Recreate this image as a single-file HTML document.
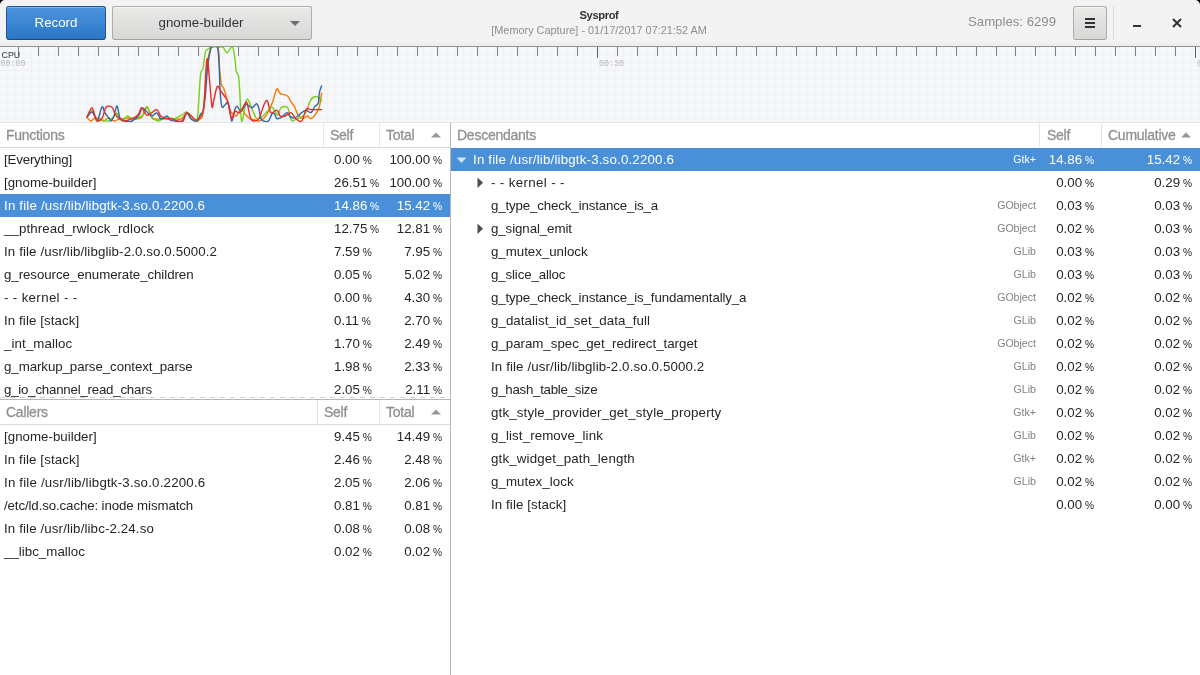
<!DOCTYPE html>
<html><head><meta charset="utf-8"><title>Sysprof</title>
<style>
*{box-sizing:border-box;margin:0;padding:0}
html,body{width:1200px;height:675px;overflow:hidden;background:#fff}
body{position:relative;font-family:"Liberation Sans",sans-serif;color:#2e3436}
.a{position:absolute}
.t{position:absolute;white-space:nowrap;line-height:23px;font-size:13.3px;color:#232627}
.p{font-size:10.2px}
.hd{position:absolute;white-space:nowrap;line-height:24px;font-size:14px;letter-spacing:-0.25px;-webkit-text-stroke:0.3px #8f9292;color:#8f9292}
.sel{background:#4a90d9}
.sel .t,.sel .lib{color:#fff}
.lib{position:absolute;white-space:nowrap;line-height:23px;font-size:10.6px;color:#7f8383;text-align:right}
.r{text-align:right}
</style></head><body><div id="w" style="position:absolute;left:0;top:0;width:1200px;height:675px;overflow:hidden;will-change:transform">

<div class="a" style="left:0;top:0;width:1200px;height:46px;background:linear-gradient(#f3f3f3,#f3f3f3 88%,#ececec)"></div>
<div class="a" style="left:0;top:46px;width:1200px;height:1px;background:#90938f"></div>
<svg class="a" style="left:0;top:0" width="6" height="6"><path d="M0 0H5A5 5 0 0 0 0 5Z" fill="#000"/></svg>
<svg class="a" style="left:1194px;top:0" width="6" height="6"><path d="M6 0H1A5 5 0 0 1 6 5Z" fill="#000"/></svg>
<div class="a" style="left:6px;top:6px;width:100px;height:34px;border:1px solid #1c5596;border-bottom-color:#174b85;border-radius:3px;background:linear-gradient(#4d93dc,#3c86d4 50%,#2a76c5);box-shadow:inset 0 1px 0 rgba(255,255,255,.3)"></div>
<div class="t" style="left:6px;top:11px;width:100px;text-align:center;font-size:13.3px;color:#fff">Record</div>
<div class="a" style="left:112px;top:6px;width:200px;height:34px;border:1px solid #adadaa;border-bottom-color:#a2a29f;border-radius:3px;background:linear-gradient(#e9e9e8,#d8d8d6);box-shadow:inset 0 1px 0 rgba(255,255,255,.6)"></div>
<div class="t" style="left:112px;top:11px;width:178px;text-align:center;color:#2e3436">gnome-builder</div>
<svg class="a" style="left:290px;top:21px" width="10" height="6"><path d="M0 0H10L5 5Z" fill="#6d7070"/></svg>
<div class="a" style="left:0;top:8px;width:1198px;text-align:center;font-size:11.2px;font-weight:bold;letter-spacing:-0.4px;color:#2e3436;line-height:14px">Sysprof</div>
<div class="a" style="left:0;top:23px;width:1198px;text-align:center;font-size:10.9px;color:#8b8e8f;line-height:14px">[Memory Capture] - 01/17/2017 07:21:52 AM</div>
<div class="t" style="left:968px;top:10px;font-size:13.2px;color:#8b8e8f">Samples: 6299</div>
<div class="a" style="left:1073px;top:6px;width:34px;height:34px;border:1px solid #adadaa;border-bottom-color:#a2a29f;border-radius:3px;background:linear-gradient(#e9e9e8,#d8d8d6);box-shadow:inset 0 1px 0 rgba(255,255,255,.6)"></div>
<div class="a" style="left:1085px;top:18px;width:10px;height:2px;background:#2e3436"></div>
<div class="a" style="left:1085px;top:22px;width:10px;height:2px;background:#2e3436"></div>
<div class="a" style="left:1085px;top:26px;width:10px;height:2px;background:#2e3436"></div>
<div class="a" style="left:1113px;top:6px;width:1px;height:34px;background:#dcdcdb"></div>
<div class="a" style="left:1133px;top:25px;width:8px;height:2px;background:#2e3436"></div>
<svg class="a" style="left:1172px;top:18px" width="10" height="10"><path d="M1 1L9 9M9 1L1 9" stroke="#2e3436" stroke-width="2"/></svg>
<svg class="a" style="left:0;top:47px" width="1200" height="75" viewBox="0 47 1200 75"><rect x="0" y="47" width="1200" height="75" fill="#f6f7f9"/><path d="M7.5 47V122 M15.5 47V122 M23.5 47V122 M31.5 47V122 M39.5 47V122 M47.5 47V122 M55.5 47V122 M63.5 47V122 M71.5 47V122 M79.5 47V122 M87.5 47V122 M95.5 47V122 M103.5 47V122 M111.5 47V122 M119.5 47V122 M127.5 47V122 M135.5 47V122 M143.5 47V122 M151.5 47V122 M159.5 47V122 M167.5 47V122 M175.5 47V122 M183.5 47V122 M191.5 47V122 M199.5 47V122 M207.5 47V122 M215.5 47V122 M223.5 47V122 M231.5 47V122 M239.5 47V122 M247.5 47V122 M255.5 47V122 M263.5 47V122 M271.5 47V122 M279.5 47V122 M287.5 47V122 M295.5 47V122 M303.5 47V122 M311.5 47V122 M319.5 47V122 M327.5 47V122 M335.5 47V122 M343.5 47V122 M351.5 47V122 M359.5 47V122 M367.5 47V122 M375.5 47V122 M383.5 47V122 M391.5 47V122 M399.5 47V122 M407.5 47V122 M415.5 47V122 M423.5 47V122 M431.5 47V122 M439.5 47V122 M447.5 47V122 M455.5 47V122 M463.5 47V122 M471.5 47V122 M479.5 47V122 M487.5 47V122 M495.5 47V122 M503.5 47V122 M511.5 47V122 M519.5 47V122 M527.5 47V122 M535.5 47V122 M543.5 47V122 M551.5 47V122 M559.5 47V122 M567.5 47V122 M575.5 47V122 M583.5 47V122 M591.5 47V122 M599.5 47V122 M607.5 47V122 M615.5 47V122 M623.5 47V122 M631.5 47V122 M639.5 47V122 M647.5 47V122 M655.5 47V122 M663.5 47V122 M671.5 47V122 M679.5 47V122 M687.5 47V122 M695.5 47V122 M703.5 47V122 M711.5 47V122 M719.5 47V122 M727.5 47V122 M735.5 47V122 M743.5 47V122 M751.5 47V122 M759.5 47V122 M767.5 47V122 M775.5 47V122 M783.5 47V122 M791.5 47V122 M799.5 47V122 M807.5 47V122 M815.5 47V122 M823.5 47V122 M831.5 47V122 M839.5 47V122 M847.5 47V122 M855.5 47V122 M863.5 47V122 M871.5 47V122 M879.5 47V122 M887.5 47V122 M895.5 47V122 M903.5 47V122 M911.5 47V122 M919.5 47V122 M927.5 47V122 M935.5 47V122 M943.5 47V122 M951.5 47V122 M959.5 47V122 M967.5 47V122 M975.5 47V122 M983.5 47V122 M991.5 47V122 M999.5 47V122 M1007.5 47V122 M1015.5 47V122 M1023.5 47V122 M1031.5 47V122 M1039.5 47V122 M1047.5 47V122 M1055.5 47V122 M1063.5 47V122 M1071.5 47V122 M1079.5 47V122 M1087.5 47V122 M1095.5 47V122 M1103.5 47V122 M1111.5 47V122 M1119.5 47V122 M1127.5 47V122 M1135.5 47V122 M1143.5 47V122 M1151.5 47V122 M1159.5 47V122 M1167.5 47V122 M1175.5 47V122 M1183.5 47V122 M1191.5 47V122 M1199.5 47V122 M0 54.5H1200 M0 62.5H1200 M0 70.5H1200 M0 78.5H1200 M0 86.5H1200 M0 94.5H1200 M0 102.5H1200 M0 110.5H1200 M0 118.5H1200" stroke="#eff1f3" stroke-width="1" fill="none"/><path d="M18.5 47V56 M38.5 47V56 M58.5 47V56 M78.5 47V56 M98.5 47V56 M118.5 47V56 M138.5 47V56 M158.5 47V56 M178.5 47V56 M198.5 47V56 M218.5 47V56 M238.5 47V56 M258.5 47V56 M278.5 47V56 M298.5 47V56 M318.5 47V56 M337.5 47V56 M357.5 47V56 M377.5 47V56 M397.5 47V56 M417.5 47V56 M437.5 47V56 M457.5 47V56 M477.5 47V56 M497.5 47V56 M517.5 47V56 M537.5 47V56 M557.5 47V56 M577.5 47V56 M617.5 47V56 M637.5 47V56 M657.5 47V56 M676.5 47V56 M696.5 47V56 M716.5 47V56 M736.5 47V56 M756.5 47V56 M776.5 47V56 M796.5 47V56 M816.5 47V56 M836.5 47V56 M856.5 47V56 M876.5 47V56 M896.5 47V56 M916.5 47V56 M936.5 47V56 M956.5 47V56 M976.5 47V56 M996.5 47V56 M1015.5 47V56 M1035.5 47V56 M1055.5 47V56 M1075.5 47V56 M1095.5 47V56 M1115.5 47V56 M1135.5 47V56 M1155.5 47V56 M1175.5 47V56" stroke="#7b8083" stroke-width="1" fill="none"/><path d="M597.5 47V58 M1195.5 47V58" stroke="#5a5e61" stroke-width="1" fill="none"/><clipPath id="cc"><rect x="0" y="47" width="1200" height="75"/></clipPath><g clip-path="url(#cc)" fill="none" stroke-width="1.4" stroke-linejoin="round" stroke-linecap="round"><path d="M87.0 117.3 C87.6 117.9 89.5 120.8 90.7 121.0 C91.9 121.2 93.0 119.0 94.2 118.5 C95.4 118.0 96.2 117.6 97.8 118.0 C99.4 118.4 101.9 121.0 103.7 121.0 C105.5 121.0 106.7 118.0 108.5 118.0 C110.3 118.0 112.7 120.8 114.4 121.0 C116.2 121.2 117.2 119.4 119.0 119.0 C120.8 118.6 123.2 118.7 125.0 118.5 C126.8 118.3 128.0 117.9 129.8 118.0 C131.6 118.1 133.7 119.1 135.7 119.0 C137.7 118.9 140.2 118.9 141.7 117.3 C143.2 115.7 143.7 111.4 144.6 109.6 C145.5 107.8 146.2 106.4 147.0 106.7 C147.8 107.0 148.5 109.4 149.4 111.4 C150.3 113.4 151.2 117.2 152.3 118.5 C153.4 119.8 154.1 118.9 155.9 119.0 C157.7 119.1 160.7 119.1 163.0 119.0 C165.3 118.9 167.0 118.5 170.0 118.5 C173.0 118.5 178.0 119.9 180.8 119.0 C183.6 118.1 184.9 113.2 186.7 113.2 C188.5 113.2 189.9 117.7 191.5 119.0 C193.1 120.3 194.8 121.0 196.2 121.0 C197.6 121.0 198.9 120.4 200.0 119.0 C201.1 117.6 201.9 121.0 203.0 112.6 C204.1 104.2 205.6 78.4 206.6 68.7 C207.6 59.0 208.2 58.0 209.0 54.5 C209.8 51.0 209.8 48.6 211.3 47.4 C212.8 46.1 216.5 43.5 217.9 47.0 C219.3 50.5 219.0 62.5 219.6 68.7 C220.2 74.9 220.6 80.5 221.4 84.1 C222.2 87.6 223.5 87.4 224.4 90.0 C225.3 92.6 226.0 96.7 226.8 99.5 C227.6 102.3 228.3 104.5 229.1 106.7 C229.9 108.9 230.3 111.0 231.5 112.6 C232.7 114.1 234.6 116.6 236.2 116.0 C237.8 115.4 239.6 109.4 241.0 109.0 C242.4 108.6 243.3 112.2 244.7 113.8 C246.1 115.4 247.9 117.5 249.5 118.5 C251.1 119.5 252.6 119.3 254.2 119.7 C255.8 120.1 257.4 121.2 259.0 121.0 C260.6 120.8 262.1 120.1 263.7 118.5 C265.3 116.9 267.0 114.2 268.5 111.4 C270.0 108.7 271.2 105.8 272.6 102.0 C274.0 98.2 275.5 90.3 276.8 88.9 C278.1 87.5 278.5 92.4 280.3 93.6 C282.1 94.8 285.6 94.6 287.4 96.0 C289.2 97.4 289.8 100.1 291.0 101.9 C292.2 103.7 293.3 104.5 294.5 106.7 C295.7 108.9 296.6 113.0 298.0 115.0 C299.4 117.0 301.2 118.3 302.8 118.5 C304.4 118.7 306.2 116.0 307.6 116.0 C309.0 116.0 309.6 118.9 311.0 118.5 C312.4 118.1 314.5 115.8 315.9 113.8 C317.3 111.8 318.4 110.2 319.4 106.7 C320.3 103.2 321.2 95.3 321.6 93.0" stroke="#f57900"/><path d="M87.0 117.3 C87.8 116.1 90.6 110.4 91.9 110.2 C93.2 110.0 94.0 114.2 94.8 116.0 C95.6 117.8 95.5 120.4 96.6 121.0 C97.7 121.6 99.3 119.7 101.3 119.7 C103.3 119.7 106.3 121.6 108.5 121.0 C110.7 120.4 113.0 117.3 114.4 116.0 C115.8 114.7 115.9 112.8 116.8 113.2 C117.7 113.6 118.7 117.2 119.7 118.5 C120.7 119.8 121.4 121.4 122.7 121.0 C124.0 120.6 125.8 116.3 127.4 116.0 C129.0 115.7 130.2 118.8 132.2 119.0 C134.2 119.2 137.3 118.2 139.3 117.3 C141.3 116.4 142.7 115.6 144.0 113.8 C145.3 112.0 146.0 106.9 147.0 106.7 C148.0 106.5 148.9 110.6 150.0 112.6 C151.1 114.6 152.1 117.1 153.5 118.5 C154.9 119.9 156.7 121.0 158.3 121.0 C159.9 121.0 161.1 119.0 163.0 118.5 C164.9 118.0 168.0 118.0 170.0 118.0 C172.0 118.0 172.9 119.0 174.9 118.5 C176.9 118.0 180.0 116.1 182.0 115.0 C184.0 113.9 184.9 111.5 186.7 112.0 C188.5 112.5 191.0 116.5 192.7 118.0 C194.4 119.5 196.0 124.3 197.0 121.0 C198.0 117.7 198.3 106.3 198.9 98.4 C199.5 90.5 200.0 78.5 200.7 73.5 C201.4 68.5 202.2 72.3 203.0 68.7 C203.8 65.1 204.4 55.5 205.4 52.1 C206.4 48.8 208.0 49.5 209.0 48.6 C210.0 47.8 209.5 47.3 211.3 47.0 C213.1 46.7 217.6 46.9 219.6 47.0 C221.6 47.1 222.0 46.4 223.2 47.4 C224.4 48.4 225.6 52.5 226.8 52.7 C228.0 52.9 229.3 49.6 230.3 48.6 C231.3 47.6 231.9 45.2 232.7 47.0 C233.5 48.8 234.4 55.2 235.0 59.2 C235.6 63.2 235.6 68.0 236.2 71.0 C236.8 74.0 238.0 73.4 238.6 77.0 C239.2 80.6 239.4 85.9 239.8 92.4 C240.2 98.9 240.6 111.2 241.0 116.0 C241.4 120.8 241.6 122.2 242.2 121.0 C242.8 119.8 243.7 112.7 244.5 109.0 C245.3 105.3 246.0 99.6 247.0 99.0 C248.0 98.4 249.7 103.4 250.7 105.5 C251.7 107.6 252.0 109.2 253.0 111.4 C254.0 113.6 255.2 117.5 256.6 118.5 C258.0 119.5 259.5 118.5 261.3 117.3 C263.1 116.1 265.5 113.1 267.3 111.4 C269.1 109.7 270.6 107.1 272.0 107.3 C273.4 107.5 274.6 111.3 275.6 112.6 C276.6 113.9 277.1 115.8 278.0 115.0 C278.9 114.2 279.4 109.1 281.0 107.8 C282.6 106.5 285.9 105.9 287.4 107.3 C288.9 108.7 289.0 113.7 289.8 116.0 C290.6 118.3 291.0 120.6 292.2 121.0 C293.4 121.4 295.4 119.1 297.0 118.5 C298.6 117.9 300.1 118.5 301.7 117.3 C303.3 116.1 304.8 114.4 306.4 111.4 C307.9 108.4 309.2 102.0 311.0 99.5 C312.8 97.0 315.2 96.4 317.0 96.6 C318.8 96.8 321.0 100.0 321.8 100.7" stroke="#73d216"/><path d="M87.0 117.0 C87.8 116.2 90.5 111.7 92.0 112.0 C93.5 112.3 95.0 117.7 96.0 119.0 C97.0 120.3 97.0 122.0 98.0 120.0 C99.0 118.0 100.8 108.2 102.0 107.0 C103.2 105.8 103.8 111.2 105.0 113.0 C106.2 114.8 108.0 116.7 109.0 118.0 C110.0 119.3 110.2 121.3 111.0 121.0 C111.8 120.7 113.0 118.5 114.0 116.0 C115.0 113.5 116.0 105.7 117.0 106.0 C118.0 106.3 118.7 115.5 120.0 118.0 C121.3 120.5 123.0 120.5 125.0 121.0 C127.0 121.5 129.7 122.0 132.0 121.0 C134.3 120.0 137.3 117.2 139.0 115.0 C140.7 112.8 140.8 108.7 142.0 108.0 C143.2 107.3 144.7 109.8 146.0 111.0 C147.3 112.2 149.0 114.2 150.0 115.0 C151.0 115.8 150.8 116.3 152.0 116.0 C153.2 115.7 155.5 112.5 157.0 113.0 C158.5 113.5 159.3 118.5 161.0 119.0 C162.7 119.5 165.5 115.8 167.0 116.0 C168.5 116.2 168.7 119.2 170.0 120.0 C171.3 120.8 173.0 120.8 175.0 121.0 C177.0 121.2 180.0 122.3 182.0 121.0 C184.0 119.7 185.5 113.3 187.0 113.0 C188.5 112.7 189.3 117.7 191.0 119.0 C192.7 120.3 195.4 121.9 197.0 121.0 C198.6 120.1 199.7 115.4 200.7 113.8 C201.7 112.2 202.2 114.6 203.0 111.4 C203.8 108.2 204.6 102.5 205.4 94.8 C206.2 87.1 206.9 72.7 207.8 65.0 C208.7 57.3 210.1 51.6 210.8 48.6 C211.5 45.6 210.9 47.3 212.0 47.0 C213.1 46.7 216.1 44.4 217.3 47.0 C218.5 49.6 218.5 55.2 219.0 62.8 C219.5 70.4 219.7 85.1 220.2 92.4 C220.7 99.7 221.1 104.7 222.0 106.7 C222.9 108.7 224.6 104.9 225.6 104.3 C226.6 103.7 227.2 101.4 228.0 103.0 C228.8 104.6 229.6 110.8 230.3 113.8 C231.0 116.8 231.2 121.8 232.0 121.0 C232.8 120.2 234.1 111.4 235.0 109.0 C235.9 106.6 236.4 106.3 237.4 106.7 C238.4 107.1 239.6 111.8 241.0 111.4 C242.4 111.0 244.2 104.9 246.0 104.3 C247.8 103.7 250.1 107.9 251.9 107.8 C253.7 107.7 255.4 103.5 256.6 103.7 C257.8 103.9 258.3 106.5 259.0 109.0 C259.7 111.5 260.0 116.5 260.8 118.5 C261.6 120.5 262.4 120.6 263.7 121.0 C265.0 121.4 267.1 122.2 268.5 121.0 C269.9 119.8 271.0 115.0 272.0 113.8 C273.0 112.6 273.6 113.0 274.4 113.8 C275.2 114.6 275.6 117.9 276.8 118.5 C278.0 119.1 279.8 118.3 281.5 117.3 C283.2 116.3 285.4 112.8 286.8 112.6 C288.2 112.4 288.7 115.1 289.8 116.0 C290.9 116.9 292.0 118.0 293.4 118.0 C294.8 118.0 296.6 116.9 298.0 116.0 C299.4 115.1 300.3 113.6 301.7 112.6 C303.1 111.6 304.8 110.2 306.4 110.2 C307.9 110.2 309.6 113.2 311.0 112.6 C312.4 112.0 313.5 108.3 314.7 106.7 C315.9 105.1 317.5 105.4 318.3 103.0 C319.1 100.6 318.8 95.2 319.4 92.4 C319.9 89.6 321.2 87.0 321.6 85.9" stroke="#3465a4"/><path d="M87.0 117.3 C87.8 115.7 90.5 107.8 91.9 107.8 C93.3 107.8 94.4 115.1 95.4 117.3 C96.4 119.5 96.6 121.0 97.8 121.0 C99.0 121.0 101.1 119.6 102.5 117.3 C103.9 115.0 104.4 109.0 106.0 107.3 C107.6 105.6 110.5 106.2 112.0 107.3 C113.5 108.4 113.8 111.9 115.0 113.8 C116.2 115.7 117.3 117.3 119.0 118.5 C120.7 119.7 122.8 121.0 125.0 121.0 C127.2 121.0 130.0 119.5 132.2 118.5 C134.4 117.5 136.4 116.8 138.0 115.0 C139.6 113.2 140.3 107.8 141.7 107.8 C143.1 107.8 144.8 114.1 146.4 115.0 C148.0 115.9 149.4 114.1 151.2 113.2 C153.0 112.3 155.4 109.1 157.0 109.6 C158.6 110.1 159.2 114.5 160.6 116.0 C162.0 117.5 163.4 118.0 165.4 118.5 C167.4 119.0 170.5 118.6 172.5 119.0 C174.5 119.4 175.4 120.7 177.2 121.0 C179.0 121.3 181.6 122.4 183.2 121.0 C184.8 119.6 184.9 113.0 186.7 112.6 C188.5 112.2 192.1 117.3 193.8 118.5 C195.5 119.7 195.7 120.3 197.0 119.7 C198.3 119.1 200.7 117.6 201.9 115.0 C203.1 112.4 203.5 112.0 204.2 104.3 C204.9 96.6 205.4 76.2 206.0 68.7 C206.6 61.2 206.9 57.2 207.5 59.2 C208.1 61.2 208.8 72.7 209.6 80.6 C210.3 88.5 211.3 103.3 212.0 106.7 C212.7 110.1 212.8 104.1 213.7 100.7 C214.6 97.3 216.1 88.1 217.3 86.5 C218.5 84.9 219.6 89.6 220.8 91.2 C222.0 92.8 223.2 94.2 224.4 96.0 C225.6 97.8 226.8 98.2 228.0 102.0 C229.2 105.8 230.3 116.9 231.5 118.5 C232.7 120.1 233.6 112.4 235.0 111.4 C236.4 110.4 238.2 113.8 239.8 112.6 C241.4 111.4 243.3 105.9 244.5 104.3 C245.7 102.7 246.0 100.6 247.0 103.0 C248.0 105.4 249.5 115.5 250.7 118.5 C251.9 121.5 252.8 121.0 254.2 121.0 C255.6 121.0 257.4 121.1 259.0 118.5 C260.6 115.9 262.3 108.5 263.7 105.5 C265.1 102.5 266.1 99.5 267.3 100.7 C268.5 101.9 269.2 111.0 270.8 112.6 C272.4 114.2 275.2 109.6 276.8 110.2 C278.4 110.8 278.9 115.0 280.3 116.0 C281.7 117.0 283.2 116.6 285.0 116.0 C286.8 115.4 289.2 112.2 291.0 112.6 C292.8 113.0 293.9 117.1 295.7 118.5 C297.5 119.9 299.9 122.6 301.7 121.0 C303.5 119.4 304.8 110.9 306.4 109.0 C307.9 107.1 308.5 109.5 311.0 109.6 C313.5 109.7 319.8 109.6 321.6 109.6" stroke="#ef2929"/></g><text x="1.5" y="57.6" font-family="Liberation Sans" font-size="8.9" fill="#2e3436">CPU</text><text x="0.5" y="65.5" font-family="Liberation Mono" font-size="8.3" fill="#b5b7b8">00:00</text><text x="599" y="66" font-family="Liberation Mono" font-size="8.3" fill="#b5b7b8">00:30</text><text x="1197" y="66" font-family="Liberation Mono" font-size="8.3" fill="#b5b7b8">01:00</text></svg>
<div class="a" style="left:0;top:122px;width:1200px;height:1px;background:#e1e2e3"></div>
<div class="a" style="left:0;top:123px;width:450px;height:25px;background:#fff;border-bottom:1px solid #dcdcdc"></div>
<div class="hd" style="left:6px;top:123px">Functions</div>
<div class="a" style="left:323px;top:123px;width:1px;height:24px;background:#e4e4e4"></div>
<div class="hd" style="left:330px;top:123px">Self</div>
<div class="a" style="left:379px;top:123px;width:1px;height:24px;background:#e4e4e4"></div>
<div class="hd" style="left:386px;top:123px">Total</div>
<svg class="a" style="left:431px;top:132px" width="10" height="6"><path d="M0 5.5L5 0.5L10 5.5Z" fill="#959898"/></svg>
<div class="a" style="left:0;top:148px;width:450px;height:23px">
<div class="t" style="left:4px;top:0;letter-spacing:-0.182px">[Everything]</div>
<div class="t" style="left:334px;top:0">0.00<span class="p"> %</span></div>
<div class="t r" style="left:380px;top:0;width:62px">100.00<span class="p"> %</span></div>
</div>
<div class="a" style="left:0;top:171px;width:450px;height:23px">
<div class="t" style="left:4px;top:0;letter-spacing:0.007px">[gnome-builder]</div>
<div class="t" style="left:334px;top:0">26.51<span class="p"> %</span></div>
<div class="t r" style="left:380px;top:0;width:62px">100.00<span class="p"> %</span></div>
</div>
<div class="a sel" style="left:0;top:194px;width:450px;height:23px">
<div class="t" style="left:4px;top:0;letter-spacing:0.181px">In file /usr/lib/libgtk-3.so.0.2200.6</div>
<div class="t" style="left:334px;top:0">14.86<span class="p"> %</span></div>
<div class="t r" style="left:380px;top:0;width:62px">15.42<span class="p"> %</span></div>
</div>
<div class="a" style="left:0;top:217px;width:450px;height:23px">
<div class="t" style="left:4px;top:0;letter-spacing:0.1px">__pthread_rwlock_rdlock</div>
<div class="t" style="left:334px;top:0">12.75<span class="p"> %</span></div>
<div class="t r" style="left:380px;top:0;width:62px">12.81<span class="p"> %</span></div>
</div>
<div class="a" style="left:0;top:240px;width:450px;height:23px">
<div class="t" style="left:4px;top:0;letter-spacing:0.115px">In file /usr/lib/libglib-2.0.so.0.5000.2</div>
<div class="t" style="left:334px;top:0">7.59<span class="p"> %</span></div>
<div class="t r" style="left:380px;top:0;width:62px">7.95<span class="p"> %</span></div>
</div>
<div class="a" style="left:0;top:263px;width:450px;height:23px">
<div class="t" style="left:4px;top:0;letter-spacing:-0.068px">g_resource_enumerate_children</div>
<div class="t" style="left:334px;top:0">0.05<span class="p"> %</span></div>
<div class="t r" style="left:380px;top:0;width:62px">5.02<span class="p"> %</span></div>
</div>
<div class="a" style="left:0;top:286px;width:450px;height:23px">
<div class="t" style="left:4px;top:0;letter-spacing:0.346px">- - kernel - -</div>
<div class="t" style="left:334px;top:0">0.00<span class="p"> %</span></div>
<div class="t r" style="left:380px;top:0;width:62px">4.30<span class="p"> %</span></div>
</div>
<div class="a" style="left:0;top:309px;width:450px;height:23px">
<div class="t" style="left:4px;top:0;letter-spacing:0.093px">In file [stack]</div>
<div class="t" style="left:334px;top:0">0.11<span class="p"> %</span></div>
<div class="t r" style="left:380px;top:0;width:62px">2.70<span class="p"> %</span></div>
</div>
<div class="a" style="left:0;top:332px;width:450px;height:23px">
<div class="t" style="left:4px;top:0;letter-spacing:0.1px">_int_malloc</div>
<div class="t" style="left:334px;top:0">1.70<span class="p"> %</span></div>
<div class="t r" style="left:380px;top:0;width:62px">2.49<span class="p"> %</span></div>
</div>
<div class="a" style="left:0;top:355px;width:450px;height:23px">
<div class="t" style="left:4px;top:0;letter-spacing:-0.074px">g_markup_parse_context_parse</div>
<div class="t" style="left:334px;top:0">1.98<span class="p"> %</span></div>
<div class="t r" style="left:380px;top:0;width:62px">2.33<span class="p"> %</span></div>
</div>
<div class="a" style="left:0;top:378px;width:450px;height:23px">
<div class="t" style="left:4px;top:0;letter-spacing:-0.227px">g_io_channel_read_chars</div>
<div class="t" style="left:334px;top:0">2.05<span class="p"> %</span></div>
<div class="t r" style="left:380px;top:0;width:62px">2.11<span class="p"> %</span></div>
</div>
<div class="a" style="left:0;top:397px;width:450px;height:278px;background:#fff"></div>
<div class="a" style="left:0;top:397px;width:450px;height:1px;background:repeating-linear-gradient(90deg,#cfcfcf 0 5px,transparent 5px 10px)"></div>
<div class="a" style="left:0;top:399px;width:450px;height:1px;background:#b6b6b3"></div>
<div class="a" style="left:0;top:400px;width:450px;height:25px;background:#fff;border-bottom:1px solid #dcdcdc"></div>
<div class="hd" style="left:6px;top:400px">Callers</div>
<div class="a" style="left:317px;top:400px;width:1px;height:24px;background:#e4e4e4"></div>
<div class="hd" style="left:324px;top:400px">Self</div>
<div class="a" style="left:379px;top:400px;width:1px;height:24px;background:#e4e4e4"></div>
<div class="hd" style="left:386px;top:400px">Total</div>
<svg class="a" style="left:431px;top:409px" width="10" height="6"><path d="M0 5.5L5 0.5L10 5.5Z" fill="#959898"/></svg>
<div class="a" style="left:0;top:425px;width:450px;height:23px">
<div class="t" style="left:4px;top:0;letter-spacing:0.018px">[gnome-builder]</div>
<div class="t" style="left:334px;top:0">9.45<span class="p"> %</span></div>
<div class="t r" style="left:380px;top:0;width:62px">14.49<span class="p"> %</span></div>
</div>
<div class="a" style="left:0;top:448px;width:450px;height:23px">
<div class="t" style="left:4px;top:0;letter-spacing:0.107px">In file [stack]</div>
<div class="t" style="left:334px;top:0">2.46<span class="p"> %</span></div>
<div class="t r" style="left:380px;top:0;width:62px">2.48<span class="p"> %</span></div>
</div>
<div class="a" style="left:0;top:471px;width:450px;height:23px">
<div class="t" style="left:4px;top:0;letter-spacing:0.188px">In file /usr/lib/libgtk-3.so.0.2200.6</div>
<div class="t" style="left:334px;top:0">2.05<span class="p"> %</span></div>
<div class="t r" style="left:380px;top:0;width:62px">2.06<span class="p"> %</span></div>
</div>
<div class="a" style="left:0;top:494px;width:450px;height:23px">
<div class="t" style="left:4px;top:0;letter-spacing:-0.121px">/etc/ld.so.cache: inode mismatch</div>
<div class="t" style="left:334px;top:0">0.81<span class="p"> %</span></div>
<div class="t r" style="left:380px;top:0;width:62px">0.81<span class="p"> %</span></div>
</div>
<div class="a" style="left:0;top:517px;width:450px;height:23px">
<div class="t" style="left:4px;top:0;letter-spacing:0.125px">In file /usr/lib/libc-2.24.so</div>
<div class="t" style="left:334px;top:0">0.08<span class="p"> %</span></div>
<div class="t r" style="left:380px;top:0;width:62px">0.08<span class="p"> %</span></div>
</div>
<div class="a" style="left:0;top:540px;width:450px;height:23px">
<div class="t" style="left:4px;top:0;letter-spacing:0.021px">__libc_malloc</div>
<div class="t" style="left:334px;top:0">0.02<span class="p"> %</span></div>
<div class="t r" style="left:380px;top:0;width:62px">0.02<span class="p"> %</span></div>
</div>
<div class="a" style="left:450px;top:123px;width:1px;height:552px;background:#b6b6b3"></div>
<div class="a" style="left:451px;top:123px;width:749px;height:25px;background:#fff"></div>
<div class="a" style="left:1039px;top:123px;width:1px;height:24px;background:#e4e4e4"></div>
<div class="a" style="left:1101px;top:123px;width:1px;height:24px;background:#e4e4e4"></div>
<div class="hd" style="left:457px;top:123px">Descendants</div>
<div class="hd" style="left:1047px;top:123px">Self</div>
<div class="hd" style="left:1108px;top:123px">Cumulative</div>
<svg class="a" style="left:1181px;top:132px" width="10" height="6"><path d="M0 5.5L5 0.5L10 5.5Z" fill="#959898"/></svg>
<div class="a sel" style="left:451px;top:148px;width:749px;height:23px">
<div class="t" style="left:22px;top:0;letter-spacing:0.181px">In file /usr/lib/libgtk-3.so.0.2200.6</div>
<svg class="a" style="left:5px;top:9px" width="11" height="7"><path d="M0.5 0.5H10.5L5.5 6Z" fill="#cfe0f4"/></svg>
<div class="lib" style="left:500px;top:0;width:85px">Gtk+</div>
<div class="t r" style="left:560px;top:0;width:83px">14.86<span class="p"> %</span></div>
<div class="t r" style="left:660px;top:0;width:81px">15.42<span class="p"> %</span></div>
</div>
<div class="a" style="left:451px;top:171px;width:749px;height:23px">
<div class="t" style="left:40px;top:0;letter-spacing:0.362px">- - kernel - -</div>
<svg class="a" style="left:26px;top:6px" width="7" height="12"><path d="M0.5 0.5V11L6 5.75Z" fill="#4a4d4d"/></svg>
<div class="t r" style="left:560px;top:0;width:83px">0.00<span class="p"> %</span></div>
<div class="t r" style="left:660px;top:0;width:81px">0.29<span class="p"> %</span></div>
</div>
<div class="a" style="left:451px;top:194px;width:749px;height:23px">
<div class="t" style="left:40px;top:0;letter-spacing:-0.14px">g_type_check_instance_is_a</div>
<div class="lib" style="left:500px;top:0;width:85px">GObject</div>
<div class="t r" style="left:560px;top:0;width:83px">0.03<span class="p"> %</span></div>
<div class="t r" style="left:660px;top:0;width:81px">0.03<span class="p"> %</span></div>
</div>
<div class="a" style="left:451px;top:217px;width:749px;height:23px">
<div class="t" style="left:40px;top:0;letter-spacing:-0.092px">g_signal_emit</div>
<svg class="a" style="left:26px;top:6px" width="7" height="12"><path d="M0.5 0.5V11L6 5.75Z" fill="#4a4d4d"/></svg>
<div class="lib" style="left:500px;top:0;width:85px">GObject</div>
<div class="t r" style="left:560px;top:0;width:83px">0.02<span class="p"> %</span></div>
<div class="t r" style="left:660px;top:0;width:81px">0.03<span class="p"> %</span></div>
</div>
<div class="a" style="left:451px;top:240px;width:749px;height:23px">
<div class="t" style="left:40px;top:0;letter-spacing:-0.023px">g_mutex_unlock</div>
<div class="lib" style="left:500px;top:0;width:85px">GLib</div>
<div class="t r" style="left:560px;top:0;width:83px">0.03<span class="p"> %</span></div>
<div class="t r" style="left:660px;top:0;width:81px">0.03<span class="p"> %</span></div>
</div>
<div class="a" style="left:451px;top:263px;width:749px;height:23px">
<div class="t" style="left:40px;top:0;letter-spacing:-0.142px">g_slice_alloc</div>
<div class="lib" style="left:500px;top:0;width:85px">GLib</div>
<div class="t r" style="left:560px;top:0;width:83px">0.03<span class="p"> %</span></div>
<div class="t r" style="left:660px;top:0;width:81px">0.03<span class="p"> %</span></div>
</div>
<div class="a" style="left:451px;top:286px;width:749px;height:23px">
<div class="t" style="left:40px;top:0;letter-spacing:-0.141px">g_type_check_instance_is_fundamentally_a</div>
<div class="lib" style="left:500px;top:0;width:85px">GObject</div>
<div class="t r" style="left:560px;top:0;width:83px">0.02<span class="p"> %</span></div>
<div class="t r" style="left:660px;top:0;width:81px">0.02<span class="p"> %</span></div>
</div>
<div class="a" style="left:451px;top:309px;width:749px;height:23px">
<div class="t" style="left:40px;top:0;letter-spacing:0.058px">g_datalist_id_set_data_full</div>
<div class="lib" style="left:500px;top:0;width:85px">GLib</div>
<div class="t r" style="left:560px;top:0;width:83px">0.02<span class="p"> %</span></div>
<div class="t r" style="left:660px;top:0;width:81px">0.02<span class="p"> %</span></div>
</div>
<div class="a" style="left:451px;top:332px;width:749px;height:23px">
<div class="t" style="left:40px;top:0;letter-spacing:-0.016px">g_param_spec_get_redirect_target</div>
<div class="lib" style="left:500px;top:0;width:85px">GObject</div>
<div class="t r" style="left:560px;top:0;width:83px">0.02<span class="p"> %</span></div>
<div class="t r" style="left:660px;top:0;width:81px">0.02<span class="p"> %</span></div>
</div>
<div class="a" style="left:451px;top:355px;width:749px;height:23px">
<div class="t" style="left:40px;top:0;letter-spacing:0.121px">In file /usr/lib/libglib-2.0.so.0.5000.2</div>
<div class="lib" style="left:500px;top:0;width:85px">GLib</div>
<div class="t r" style="left:560px;top:0;width:83px">0.02<span class="p"> %</span></div>
<div class="t r" style="left:660px;top:0;width:81px">0.02<span class="p"> %</span></div>
</div>
<div class="a" style="left:451px;top:378px;width:749px;height:23px">
<div class="t" style="left:40px;top:0;letter-spacing:-0.269px">g_hash_table_size</div>
<div class="lib" style="left:500px;top:0;width:85px">GLib</div>
<div class="t r" style="left:560px;top:0;width:83px">0.02<span class="p"> %</span></div>
<div class="t r" style="left:660px;top:0;width:81px">0.02<span class="p"> %</span></div>
</div>
<div class="a" style="left:451px;top:401px;width:749px;height:23px">
<div class="t" style="left:40px;top:0;letter-spacing:0.153px">gtk_style_provider_get_style_property</div>
<div class="lib" style="left:500px;top:0;width:85px">Gtk+</div>
<div class="t r" style="left:560px;top:0;width:83px">0.02<span class="p"> %</span></div>
<div class="t r" style="left:660px;top:0;width:81px">0.02<span class="p"> %</span></div>
</div>
<div class="a" style="left:451px;top:424px;width:749px;height:23px">
<div class="t" style="left:40px;top:0;letter-spacing:0.1px">g_list_remove_link</div>
<div class="lib" style="left:500px;top:0;width:85px">GLib</div>
<div class="t r" style="left:560px;top:0;width:83px">0.02<span class="p"> %</span></div>
<div class="t r" style="left:660px;top:0;width:81px">0.02<span class="p"> %</span></div>
</div>
<div class="a" style="left:451px;top:447px;width:749px;height:23px">
<div class="t" style="left:40px;top:0;letter-spacing:0.157px">gtk_widget_path_length</div>
<div class="lib" style="left:500px;top:0;width:85px">Gtk+</div>
<div class="t r" style="left:560px;top:0;width:83px">0.02<span class="p"> %</span></div>
<div class="t r" style="left:660px;top:0;width:81px">0.02<span class="p"> %</span></div>
</div>
<div class="a" style="left:451px;top:470px;width:749px;height:23px">
<div class="t" style="left:40px;top:0;letter-spacing:0.045px">g_mutex_lock</div>
<div class="lib" style="left:500px;top:0;width:85px">GLib</div>
<div class="t r" style="left:560px;top:0;width:83px">0.02<span class="p"> %</span></div>
<div class="t r" style="left:660px;top:0;width:81px">0.02<span class="p"> %</span></div>
</div>
<div class="a" style="left:451px;top:493px;width:749px;height:23px">
<div class="t" style="left:40px;top:0;letter-spacing:0.093px">In file [stack]</div>
<div class="t r" style="left:560px;top:0;width:83px">0.00<span class="p"> %</span></div>
<div class="t r" style="left:660px;top:0;width:81px">0.00<span class="p"> %</span></div>
</div>
</div></body></html>
